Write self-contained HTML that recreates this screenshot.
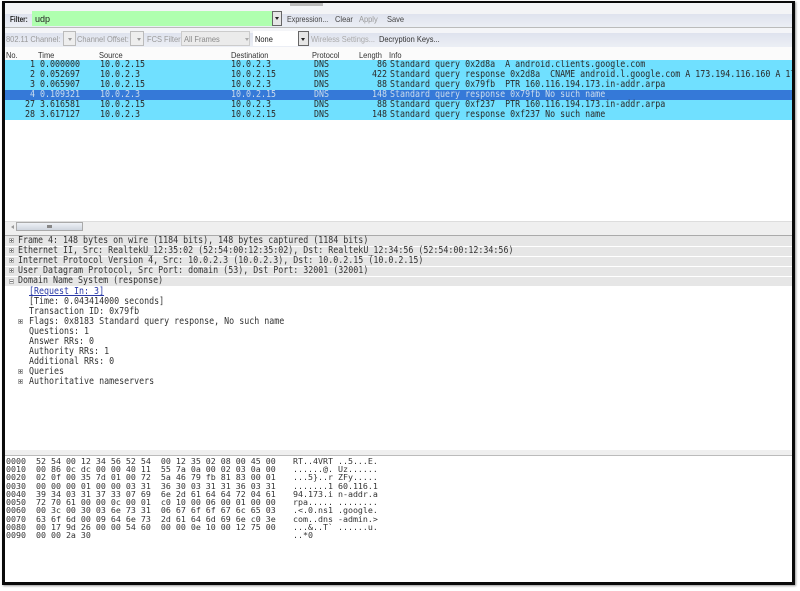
<!DOCTYPE html>
<html>
<head>
<meta charset="utf-8">
<style>
html,body{margin:0;padding:0;background:#fff;width:800px;height:591px;overflow:hidden}
#a{position:absolute;left:0;top:0;width:800px;height:591px;overflow:hidden;background:#fff;filter:blur(.35px)}
#a div,#a pre{position:absolute;margin:0;white-space:pre}
.s{font-family:"Liberation Sans",sans-serif;font-size:8.5px;color:#333;line-height:11px;transform:scaleX(.88);transform-origin:0 0}
.m{font-family:"DejaVu Sans Mono",monospace;font-size:9.5px;line-height:10px;color:#2a2a2a;transform:scaleX(.875);transform-origin:0 0}
.h{font-family:"DejaVu Sans Mono",monospace;font-size:8.3px;line-height:8.22px;color:#333;top:457px}
.r{left:5px;width:787px;height:10px}
.b{left:5px;width:787px;height:9px;background:#e6e6e6}
.x{width:5px;height:5px;box-sizing:border-box;border:1px solid #b0b0b0;background:linear-gradient(#777,#777) center/3px 1px no-repeat #f6f6f6}
.p{background:linear-gradient(#777,#777) center/3px 1px no-repeat,linear-gradient(#777,#777) center/1px 3px no-repeat,#f6f6f6}
</style>
</head>
<body>
<div id="a">
<!-- toolbars -->
<div style="left:5px;top:3px;width:787px;height:11px;background:#f3f4f6"></div>
<div style="left:290px;top:3px;width:33px;height:3px;background:#bbb"></div>
<div style="left:5px;top:14px;width:787px;height:14px;background:linear-gradient(#dfe3ee,#eceff5)"></div>
<div style="left:5px;top:27px;width:787px;height:1px;background:#bbb"></div>
<div style="left:5px;top:28px;width:787px;height:5px;background:#f4f5f8"></div>
<div style="left:5px;top:33px;width:787px;height:14px;background:linear-gradient(#dfe3ee,#eceff5)"></div>
<div style="left:5px;top:47px;width:787px;height:13px;background:#fbfbfb"></div>
<div class="s" style="left:10px;top:14px;color:#222;font-weight:bold;font-size:8px;transform:scaleX(.8)">Filter:</div>
<div style="left:32px;top:11px;width:240px;height:15px;background:#afffaf"></div>
<div class="s" style="left:35px;top:14px;color:#222;font-size:9px;transform:none">udp</div>
<div style="left:272px;top:11px;width:10px;height:15px;background:#e6e6e6;border:1px solid #666;box-sizing:border-box"></div>
<div style="left:275px;top:17px;width:0;height:0;border:2.5px solid transparent;border-top:3px solid #222"></div>
<div class="s" style="left:287px;top:14px;color:#444;transform:scaleX(.84)">Expression...</div>
<div class="s" style="left:335px;top:14px;color:#444">Clear</div>
<div class="s" style="left:359px;top:14px;color:#999">Apply</div>
<div class="s" style="left:387px;top:14px;color:#444">Save</div>

<div class="s" style="left:6px;top:34px;color:#999">802.11 Channel:</div>
<div style="left:63px;top:31px;width:13px;height:15px;background:#eee;border:1px solid #bbb;box-sizing:border-box"></div>
<div style="left:68px;top:38px;width:0;height:0;border:2px solid transparent;border-top:3px solid #999"></div>
<div class="s" style="left:77px;top:34px;color:#999">Channel Offset:</div>
<div style="left:130px;top:31px;width:14px;height:15px;background:#eee;border:1px solid #bbb;box-sizing:border-box"></div>
<div style="left:137px;top:38px;width:0;height:0;border:2px solid transparent;border-top:3px solid #999"></div>
<div class="s" style="left:147px;top:34px;color:#999">FCS Filter:</div>
<div style="left:181px;top:31px;width:69px;height:15px;background:#ebebeb;border:1px solid #ccc;box-sizing:border-box"></div>
<div class="s" style="left:184px;top:34px;color:#888">All Frames</div>
<div style="left:245px;top:38px;width:0;height:0;border:2px solid transparent;border-top:3px solid #aaa"></div>
<div style="left:253px;top:31px;width:46px;height:15px;background:#fff"></div>
<div class="s" style="left:255px;top:34px;color:#222">None</div>
<div style="left:298px;top:31px;width:11px;height:15px;background:#e6e6e6;border:1px solid #666;box-sizing:border-box"></div>
<div style="left:301px;top:38px;width:0;height:0;border:2.5px solid transparent;border-top:3px solid #222"></div>
<div class="s" style="left:311px;top:34px;color:#aaa">Wireless Settings...</div>
<div class="s" style="left:379px;top:34px;color:#333">Decryption Keys...</div>

<!-- column header -->
<div class="s" style="left:6px;top:50px">No.</div>
<div class="s" style="left:38px;top:50px">Time</div>
<div class="s" style="left:99px;top:50px">Source</div>
<div class="s" style="left:231px;top:50px">Destination</div>
<div class="s" style="left:312px;top:50px">Protocol</div>
<div class="s" style="left:359px;top:50px">Length</div>
<div class="s" style="left:389px;top:50px">Info</div>

<!-- packet rows -->
<div class="r" style="top:60px;background:#70e0ff"></div>
<div class="r" style="top:70px;background:#70e0ff"></div>
<div class="r" style="top:80px;background:#70e0ff"></div>
<div class="r" style="top:90px;background:#3579d8"></div>
<div class="r" style="top:100px;background:#70e0ff"></div>
<div class="r" style="top:110px;background:#70e0ff"></div>
<pre class="m" style="left:9.5px;top:60px">    1 0.000000
    2 0.052697
    3 0.065907
<span style="color:#cde">    4 0.109321</span>
   27 3.616581
   28 3.617127</pre>
<pre class="m" style="left:100px;top:60px">10.0.2.15
10.0.2.3
10.0.2.15
<span style="color:#cde">10.0.2.3</span>
10.0.2.15
10.0.2.3</pre>
<pre class="m" style="left:231px;top:60px">10.0.2.3
10.0.2.15
10.0.2.3
<span style="color:#cde">10.0.2.15</span>
10.0.2.3
10.0.2.15</pre>
<pre class="m" style="left:314px;top:60px">DNS
DNS
DNS
<span style="color:#cde">DNS</span>
DNS
DNS</pre>
<pre class="m" style="left:372px;top:60px"> 86
422
 88
<span style="color:#cde">148</span>
 88
148</pre>
<pre class="m" style="left:390px;top:60px;width:459px;height:60px;overflow:hidden">Standard query 0x2d8a  A android.clients.google.com
Standard query response 0x2d8a  CNAME android.l.google.com A 173.194.116.160 A 173.194.116.161
Standard query 0x79fb  PTR 160.116.194.173.in-addr.arpa
<span style="color:#cde">Standard query response 0x79fb No such name</span>
Standard query 0xf237  PTR 160.116.194.173.in-addr.arpa
Standard query response 0xf237 No such name</pre>

<!-- scrollbar -->
<div style="left:5px;top:221px;width:787px;height:14px;background:#efefef"></div>
<div style="left:5px;top:221px;width:787px;height:1px;background:#ddd"></div>
<div style="left:5px;top:235px;width:787px;height:1px;background:#aaa"></div>
<div style="left:16px;top:222px;width:67px;height:9px;background:linear-gradient(#eef1f6,#cfd5de);border:1px solid #aaa;box-sizing:border-box"></div>
<div style="left:47px;top:225px;width:5px;height:3px;background:#888"></div>
<div style="left:9px;top:225px;width:0;height:0;border:2px solid transparent;border-right:3px solid #999"></div>

<!-- details -->
<div class="b" style="top:236px;height:10px"></div>
<div class="b" style="top:247px"></div>
<div class="b" style="top:257px"></div>
<div class="b" style="top:267px"></div>
<div class="b" style="top:277px"></div>
<div class="x p" style="left:9px;top:238px"></div>
<div class="x p" style="left:9px;top:248px"></div>
<div class="x p" style="left:9px;top:258px"></div>
<div class="x p" style="left:9px;top:268px"></div>
<div class="x" style="left:9px;top:279px"></div>
<div class="x p" style="left:18px;top:319px"></div>
<div class="x p" style="left:18px;top:369px"></div>
<div class="x p" style="left:18px;top:379px"></div>
<pre class="m" style="left:18px;top:236px;color:#333;line-height:10.05px">Frame 4: 148 bytes on wire (1184 bits), 148 bytes captured (1184 bits)
Ethernet II, Src: RealtekU_12:35:02 (52:54:00:12:35:02), Dst: RealtekU_12:34:56 (52:54:00:12:34:56)
Internet Protocol Version 4, Src: 10.0.2.3 (10.0.2.3), Dst: 10.0.2.15 (10.0.2.15)
User Datagram Protocol, Src Port: domain (53), Dst Port: 32001 (32001)
Domain Name System (response)</pre>
<pre class="m" style="left:28.5px;top:287px;color:#333"><span style="color:#2a3aa8;text-decoration:underline">[Request In: 3]</span>
[Time: 0.043414000 seconds]
Transaction ID: 0x79fb
Flags: 0x8183 Standard query response, No such name
Questions: 1
Answer RRs: 0
Authority RRs: 1
Additional RRs: 0
Queries
Authoritative nameservers</pre>

<div style="left:5px;top:450px;width:787px;height:5px;background:#efefef"></div>
<div style="left:5px;top:455px;width:787px;height:1px;background:#bbb"></div>

<!-- hex -->
<pre class="h" style="left:6px">0000  52 54 00 12 34 56 52 54  00 12 35 02 08 00 45 00
0010  00 86 0c dc 00 00 40 11  55 7a 0a 00 02 03 0a 00
0020  02 0f 00 35 7d 01 00 72  5a 46 79 fb 81 83 00 01
0030  00 00 00 01 00 00 03 31  36 30 03 31 31 36 03 31
0040  39 34 03 31 37 33 07 69  6e 2d 61 64 64 72 04 61
0050  72 70 61 00 00 0c 00 01  c0 10 00 06 00 01 00 00
0060  00 3c 00 30 03 6e 73 31  06 67 6f 6f 67 6c 65 03
0070  63 6f 6d 00 09 64 6e 73  2d 61 64 6d 69 6e c0 3e
0080  00 17 9d 26 00 00 54 60  00 00 0e 10 00 12 75 00
0090  00 00 2a 30</pre>
<pre class="h" style="left:293px">RT..4VRT ..5...E.
......@. Uz......
...5}..r ZFy.....
.......1 60.116.1
94.173.i n-addr.a
rpa..... ........
.&lt;.0.ns1 .google.
com..dns -admin.&gt;
...&amp;..T` ......u.
..*0</pre>

<!-- frame -->
<div style="left:2px;top:1px;width:793px;height:584px;border:3px solid #0a0a0a;border-top-width:2.5px;box-sizing:border-box;box-shadow:1px 1px 2px #999"></div>
</div>
</body>
</html>
